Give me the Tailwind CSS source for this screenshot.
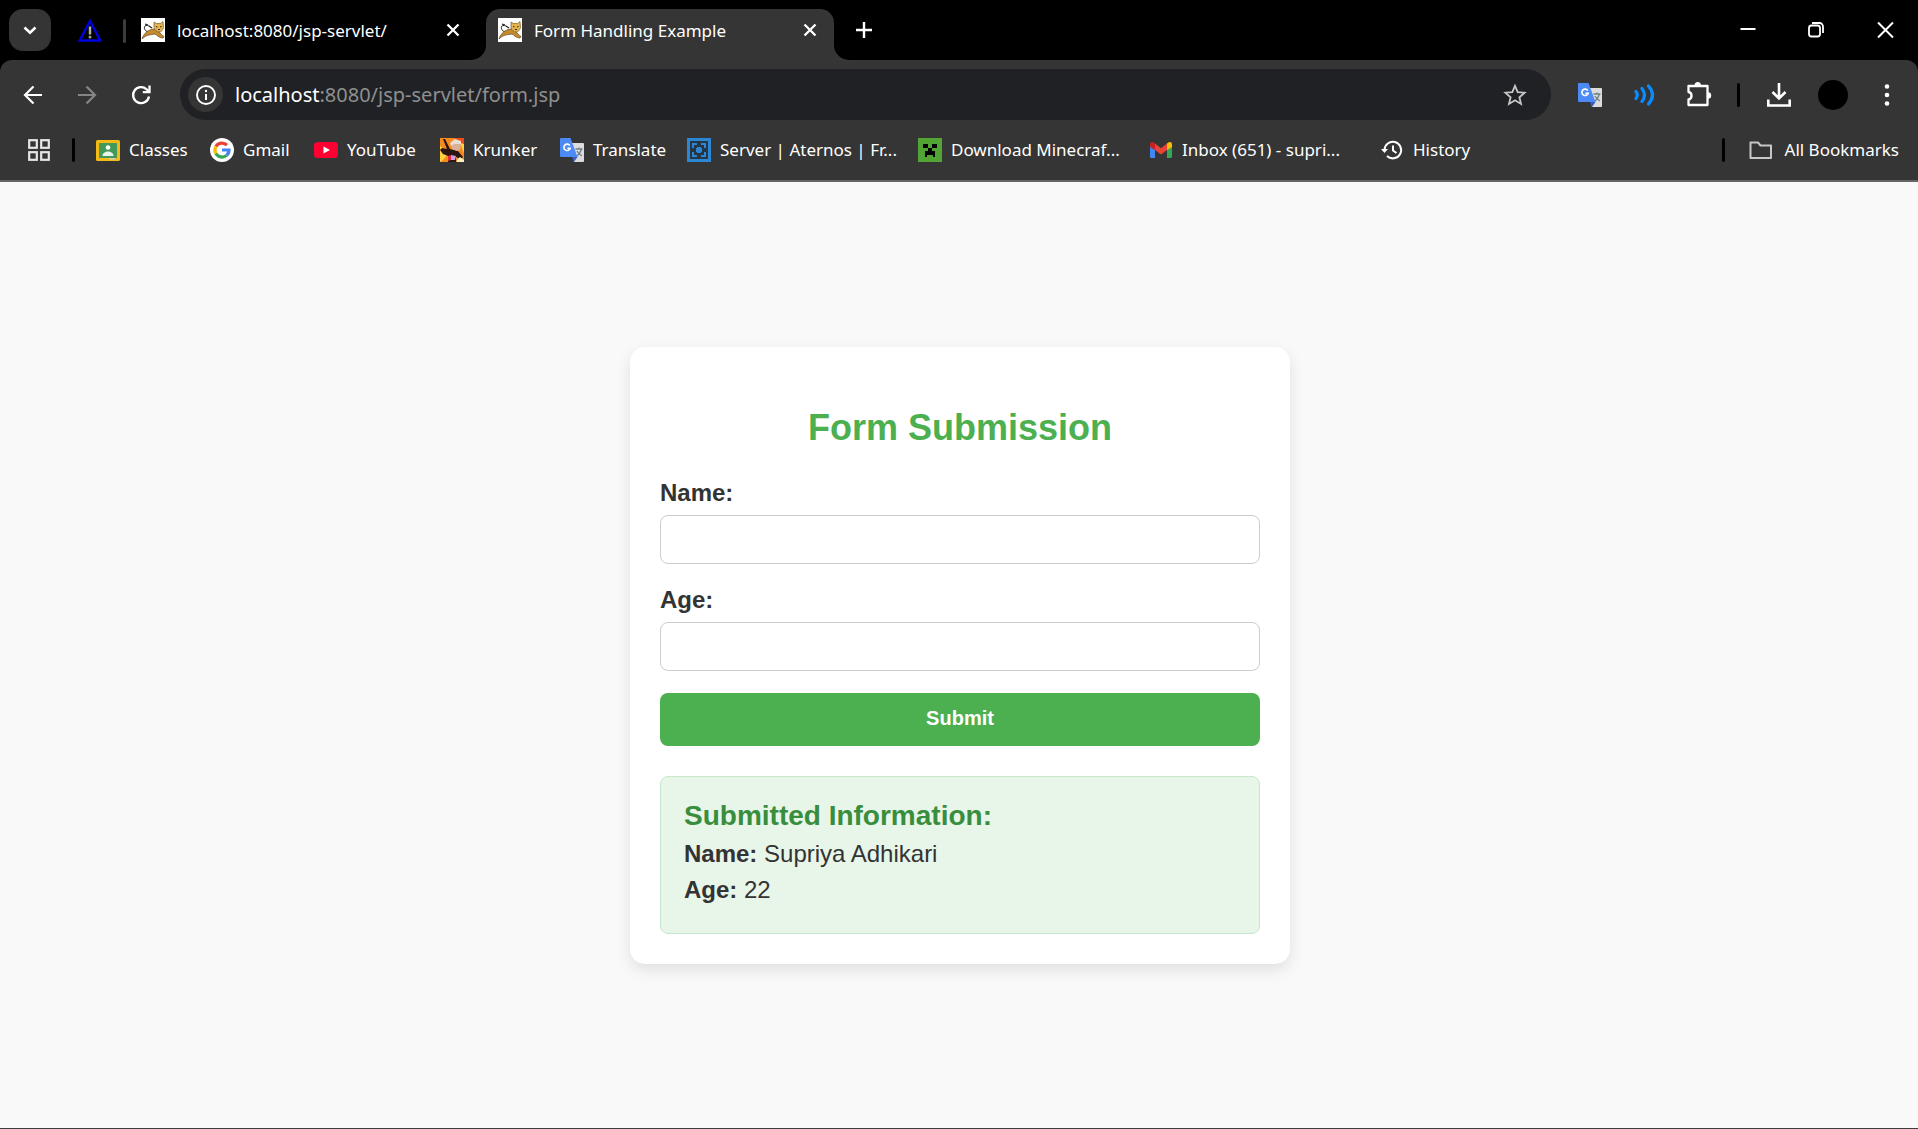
<!DOCTYPE html>
<html lang="en">
<head>
<meta charset="utf-8">
<meta name="viewport" content="width=device-width, initial-scale=1">
<title>Form Handling Example</title>
<script src="https://cdn.jsdelivr.net/npm/@tailwindcss/browser@4"></script>
</head>
<body class="min-h-screen flex flex-col bg-black">

<!-- Shared icon symbols -->
<svg class="hidden" aria-hidden="true">
  <symbol id="tomcat" viewBox="0 0 24 24">
    <rect width="24" height="24" fill="#fff"/>
    <path d="M9 14.500C3 14 2 8 5 7.500C7 7 8 8 9 9" fill="none" stroke="#222" stroke-width="1"/>
    <path d="M4 6l3 1M8 8l3 2" stroke="#222" stroke-width="1.200"/>
    <path d="M1 21C3 15 7 12 12 11L18 13C19 16 21 17 23 18.500L22 20C18 20 16 17 14 16C10 17 6 16 1 21Z" fill="#c58a2b" stroke="#5f4520" stroke-width=".7"/>
    <path d="M13 4l2.500 1.500h4L22 3.500l.5 6C22 12 20 14 18 14S13.500 12 13 9.500Z" fill="#e2b552" stroke="#7b5a25" stroke-width=".7"/>
    <path d="M15 8.500l1.500.5M20.500 8.500L19 9M17 11.500h2" stroke="#33250f" stroke-width="1"/>
  </symbol>
  <symbol id="translate" viewBox="0 0 24 24">
    <path d="M11 5h12a1 1 0 0 1 1 1v17a1 1 0 0 1-1 1h-9z" fill="#dcdcdc"/>
    <path d="M15.500 11h7M19 9.500V11M21.500 11c-1 4-3 6-5 7.500M17 13c1 2 3 4 5 5" fill="none" stroke="#70808a" stroke-width="1.300"/>
    <path d="M12 19h5.500L14 24z" fill="#3a5bc4"/>
    <path d="M1 0h9.500L17.500 19H1a1 1 0 0 1-1-1V1a1 1 0 0 1 1-1z" fill="#4c8bf5"/>
    <path d="M9.800 7.600A3.200 3.200 0 1 0 10.200 10.200H7.400" fill="none" stroke="#fff" stroke-width="1.600"/>
  </symbol>
  <symbol id="cross" viewBox="0 0 24 24">
    <path d="M6.500 6.500l11 11M17.500 6.500l-11 11" stroke="#fff" stroke-width="2.300" fill="none"/>
  </symbol>
</svg>

<header class="font-['Noto_Sans','Open_Sans',sans-serif] text-white">
  <!-- Tab strip -->
  <div class="flex h-[60px] items-end bg-black pl-[9px]">
    <button type="button" aria-label="Search tabs" class="mb-[9px] flex size-[42px] items-center justify-center rounded-[14px] bg-[#353535]">
      <svg class="size-6" viewBox="0 0 24 24"><path d="M6.500 9.500l5.500 5.200 5.500-5.200" fill="none" stroke="#fff" stroke-width="2.600"/></svg>
    </button>
    <a href="#" aria-label="Pinned tab" class="ml-[27px] mb-[18px]">
      <svg class="size-6" viewBox="0 0 24 24"><path d="M12 3L22.200 22.500H1.800Z" fill="#000" stroke="#0000e0" stroke-width="2.400"/><path d="M12 8.500v8" stroke="#b5b5a5" stroke-width="2.400"/><circle cx="12" cy="19" r="1.500" fill="#a0a090"/></svg>
    </a>
    <span class="ml-[21px] mb-[17px] h-6 w-[3px] rounded-full bg-[#3c3c3c]"></span>
    <div class="ml-[15px] flex h-[51px] w-[345px] items-center pr-[21px] pb-[9px]">
      <svg class="size-6 shrink-0"><use href="#tomcat"/></svg>
      <a href="#" class="ml-3 flex-1 pt-0.5 text-[17px] leading-6 whitespace-nowrap">localhost:8080/jsp-servlet/</a>
      <button type="button" aria-label="Close tab" class="size-6"><svg class="size-6"><use href="#cross"/></svg></button>
    </div>
    <div class="relative flex h-[51px] w-[348px] items-center rounded-t-[14px] bg-[#353535] px-3 pb-[9px]">
      <svg class="absolute right-full bottom-0 size-[15px]" viewBox="0 0 15 15"><path d="M15 0v15H0A15 15 0 0 0 15 0z" fill="#353535"/></svg>
      <svg class="absolute left-full bottom-0 size-[15px]" viewBox="0 0 15 15"><path d="M0 0v15h15A15 15 0 0 1 0 0z" fill="#353535"/></svg>
      <svg class="size-6 shrink-0"><use href="#tomcat"/></svg>
      <a href="#" class="ml-3 flex-1 pt-0.5 text-[17px] leading-6 whitespace-nowrap">Form Handling Example</a>
      <button type="button" aria-label="Close tab" class="size-6"><svg class="size-6"><use href="#cross"/></svg></button>
    </div>
    <button type="button" aria-label="New tab" class="ml-3 mb-3 flex size-9 items-center justify-center">
      <svg class="size-6" viewBox="0 0 24 24"><path d="M12 4v16M4 12h16" stroke="#fff" stroke-width="2.400"/></svg>
    </button>
    <div class="ml-auto flex h-full">
      <button type="button" aria-label="Minimize" class="flex w-[68px] items-center justify-center"><svg class="size-6" viewBox="0 0 24 24"><path d="M4.500 11h15" stroke="#fff" stroke-width="2"/></svg></button>
      <button type="button" aria-label="Restore" class="flex w-[68px] items-center justify-center"><svg class="size-6" viewBox="0 0 24 24" fill="none" stroke="#fff" stroke-width="1.800"><rect x="5" y="7.500" width="11" height="11" rx="2.500"/><path d="M8 5h7.500a3.500 3.500 0 0 1 3.500 3.500V15"/></svg></button>
      <button type="button" aria-label="Close" class="flex w-[68px] items-center justify-center"><svg class="size-6" viewBox="0 0 24 24"><path d="M6 4.500l15 15M21 4.500l-15 15" stroke="#fff" stroke-width="2"/></svg></button>
    </div>
  </div>

  <div class="rounded-t-[12px] border-b-2 border-[#666] bg-[#353535]">
    <!-- Address bar -->
    <div class="flex h-[69px] items-center pr-[19px] pl-[21px]">
      <button type="button" aria-label="Back" class="size-6"><svg class="size-6" viewBox="0 0 24 24" fill="none" stroke="#fff" stroke-width="2.200"><path d="M21 12H5M12.500 3.500L4 12l8.500 8.500"/></svg></button>
      <button type="button" aria-label="Forward" class="ml-[30px] size-6"><svg class="size-6" viewBox="0 0 24 24" fill="none" stroke="#858585" stroke-width="2.200"><path d="M3 12h16M11.500 3.500L20 12l-8.500 8.500"/></svg></button>
      <button type="button" aria-label="Reload" class="ml-[30px] size-6"><svg class="size-6" viewBox="0 0 24 24" fill="none" stroke="#fff" stroke-width="2.300"><path d="M20 13.500A8 8 0 1 1 17.600 6.300L20 8.700"/><path d="M20.500 2.500V9.200H13.800"/></svg></button>
      <div class="ml-[27px] flex h-[51px] flex-1 items-center rounded-full bg-[#202124] pr-6 pl-2">
        <button type="button" aria-label="View site information" class="flex size-[35px] items-center justify-center rounded-full bg-[#353535]">
          <svg class="size-6" viewBox="0 0 24 24"><circle cx="12" cy="12" r="9" fill="none" stroke="#fff" stroke-width="1.900"/><path d="M12 11v6" stroke="#fff" stroke-width="2"/><circle cx="12" cy="8" r="1.200" fill="#fff"/></svg>
        </button>
        <a href="#" class="ml-3 flex-1 text-[20px] leading-7 whitespace-nowrap text-[#8f8f8f]"><span class="text-white">localhost</span>:8080/jsp-servlet/form.jsp</a>
        <button type="button" aria-label="Bookmark this tab" class="size-6"><svg class="size-6" viewBox="0 0 24 24"><path d="M12 2.800l2.700 6.300 6.900.6-5.200 4.500 1.600 6.700-6-3.600-6 3.600 1.600-6.700-5.200-4.500 6.900-.6z" fill="none" stroke="#c7c7c7" stroke-width="1.800"/></svg></button>
      </div>
      <button type="button" aria-label="Google Translate" class="ml-[27px] size-6"><svg class="size-6"><use href="#translate"/></svg></button>
      <button type="button" aria-label="Read aloud" class="ml-[30px] size-6"><svg class="size-6" viewBox="0 0 24 24" fill="none" stroke="#0a8cff" stroke-width="3.200" stroke-linecap="round"><path d="M4 8.500q2.500 3.500 0 7M10 5.500q5 6.500 0 13M16.500 3q8 9 0 18"/></svg></button>
      <button type="button" aria-label="Extensions" class="ml-[30px] size-6"><svg class="size-6 overflow-visible" viewBox="0 0 24 24"><path d="M2.500 3h19v19h-19v-5.500c4-.7 4-7 0-7.500z" fill="none" stroke="#fff" stroke-width="2.300" stroke-linejoin="round"/><path d="M8.500 2.500a3.200 3.500 0 0 1 6.500 0zM22 9.200a3.200 3.200 0 0 1 0 6.400z" fill="#fff"/></svg></button>
      <span class="ml-[27px] h-6 w-[3px] rounded-full bg-black"></span>
      <button type="button" aria-label="Downloads" class="ml-[27px] size-6"><svg class="size-6" viewBox="0 0 24 24" fill="none" stroke="#fff" stroke-width="2.600"><path d="M12 0v15M5.500 9L12 15.500 18.500 9M1.300 16.500v6h21.400v-6"/></svg></button>
      <button type="button" aria-label="Profile" class="ml-[27px] size-[30px] rounded-full bg-black"></button>
      <button type="button" aria-label="Menu" class="ml-[27px] size-6"><svg class="size-6" viewBox="0 0 24 24" fill="#fff"><circle cx="12" cy="3.500" r="2.300"/><circle cx="12" cy="12" r="2.300"/><circle cx="12" cy="20.500" r="2.300"/></svg></button>
    </div>

    <!-- Bookmarks bar -->
    <nav class="flex h-[51px] items-center pr-[19px] pb-[9px] pl-[27px] text-[17px] leading-6 whitespace-nowrap">
      <button type="button" aria-label="Apps" class="size-6"><svg class="size-6" viewBox="0 0 24 24" fill="none" stroke="#e6e6e6" stroke-width="2.200"><rect x="2.200" y="2.200" width="7.600" height="7.600"/><rect x="14.200" y="2.200" width="7.600" height="7.600"/><rect x="2.200" y="14.200" width="7.600" height="7.600"/><rect x="14.200" y="14.200" width="7.600" height="7.600"/></svg></button>
      <span class="ml-[21px] h-6 w-[3px] rounded-full bg-black"></span>
      <a href="#" class="ml-[21px] flex w-[114px] items-center gap-[9px]"><svg class="size-6 shrink-0" viewBox="0 0 24 24"><rect y="2" width="24" height="21" rx="1.500" fill="#f5ba15"/><rect x="3" y="5" width="18" height="15" fill="#43995a"/><circle cx="12" cy="9.500" r="2.300" fill="#fff"/><path d="M6.500 18c0-6 11-6 11 0z" fill="#e8f3ea"/><path d="M13 20h6v1.500h-6z" fill="#d0d0c0"/></svg>Classes</a>
      <a href="#" class="flex w-[104px] items-center gap-[9px]"><svg class="size-6 shrink-0" viewBox="0 0 24 24" fill="none" stroke-width="3.200"><circle cx="12" cy="12" r="12" fill="#fff"/><path d="M17 7.200A7 7 0 0 0 5.900 8.500" stroke="#ea4335"/><path d="M5.900 8.500A7 7 0 0 0 5.900 15.500" stroke="#fbbc05"/><path d="M5.900 15.500A7 7 0 0 0 16.500 17.400" stroke="#34a853"/><path d="M16.500 17.400A7 7 0 0 0 19 12H12" stroke="#4285f4"/></svg>Gmail</a>
      <a href="#" class="flex w-[126px] items-center gap-[9px]"><svg class="size-6 shrink-0" viewBox="0 0 24 24"><rect y="4" width="24" height="16" rx="3.500" fill="#ff0033"/><path d="M9.500 8.500v7l6.500-3.500z" fill="#fff"/></svg>YouTube</a>
      <a href="#" class="flex w-[120px] items-center gap-[9px]"><svg class="size-6 shrink-0" viewBox="0 0 24 24"><rect width="24" height="24" fill="#f58a1f"/><path d="M0 0h24v7L14 0z" fill="#f04a18"/><path d="M0 8l9 7-6 7-3 2zM20 5l4 1v9z" fill="#ffd23a"/><path d="M3 1l2 0 5 10 8 2 5 6-2 2-5-2 0 5H8l0-6-5-2-3-4 2-2 5 1z" fill="#2a1512"/><path d="M11 5l5-2 5 2-1 7-3 1-5-2z" fill="#d9b196"/><path d="M10 5l5-4 6 2v3h-7l-3 2z" fill="#e9ddd2"/><path d="M8 18l3-1v5l-3 1z" fill="#e22c3c"/><path d="M11 17l5 1-1 4-4 0z" fill="#c9a0e8"/><path d="M17 22l3-3 4 3v2h-7z" fill="#fff0c0"/></svg>Krunker</a>
      <a href="#" class="flex w-[127px] items-center gap-[9px]"><svg class="size-6 shrink-0"><use href="#translate"/></svg>Translate</a>
      <a href="#" class="flex w-[231px] items-center gap-[9px]"><svg class="size-6 shrink-0" viewBox="0 0 24 24"><rect width="24" height="24" fill="#2b87d3"/><rect x="3" y="3" width="18" height="18" fill="#263645"/><path d="M9 9h6v6H9zM5 5h5v2H7v3H5zM14 5h5v5h-2V7h-3zM5 14h2v3h3v2H5zM17 14h2v5h-5v-2h3z" fill="#2b87d3"/><path d="M8 8h2v2H8zM14 8h2v2h-2zM8 14h2v2H8zM14 14h2v2h-2z" fill="#263645"/></svg>Server | Aternos | Fr...</a>
      <a href="#" class="flex w-[231px] items-center gap-[9px]"><svg class="size-6 shrink-0" viewBox="0 0 24 24"><rect width="24" height="24" fill="#52a535"/><path d="M5 6h5v4H5zM14 6h5v4h-5zM10 10h4v3h3v6h-2v-2h-6v2H7v-6h3z" fill="#000"/></svg>Download Minecraf...</a>
      <a href="#" class="flex w-[231px] items-center gap-[9px]"><svg class="size-6 shrink-0" viewBox="0 0 24 24"><path d="M1 7l5 4v9H2.500A1.500 1.500 0 0 1 1 18.500z" fill="#4285f4"/><path d="M23 7l-5 4v9h3.500a1.500 1.500 0 0 0 1.500-1.500z" fill="#34a853"/><path d="M6 5.500l6 4.700 6-4.700v6.500l-6 4.500L6 12z" fill="#ea4335"/><path d="M1 9V6.500C1 4 3.500 3.500 5 4.700l1 .8V12z" fill="#c5221f"/><path d="M23 9V6.500C23 4 20.500 3.500 19 4.700l-1 .8V12z" fill="#fbbc04"/></svg>Inbox (651) - supri...</a>
      <a href="#" class="flex items-center gap-[9px]"><svg class="size-6 shrink-0" viewBox="0 0 24 24" fill="none" stroke="#fff" stroke-width="2"><path d="M4.500 12a8.300 8.300 0 1 1 2.500 6"/><path d="M13 7.500V12.500l3.500 2.500"/><path d="M1 11h7l-3.500 4z" fill="#fff" stroke="none"/></svg>History</a>
      <span class="ml-auto h-6 w-[3px] rounded-full bg-black"></span>
      <a href="#" class="ml-6 flex items-center gap-3"><svg class="size-6 shrink-0" viewBox="0 0 24 24"><path d="M1.500 4.500h7.500l2.500 3h10.500v12.500H1.500z" fill="none" stroke="#c7c7c7" stroke-width="2" stroke-linejoin="round"/></svg>All Bookmarks</a>
    </nav>
  </div>
</header>

<!-- Page content -->
<main class="flex flex-1 items-center justify-center border-b border-[#3c3c3c] bg-[#f9f9f9] pl-0.5 font-['Liberation_Sans',Arial,sans-serif] text-2xl leading-9 text-[#333]">
  <div class="w-full max-w-[660px] rounded-[15px] bg-white p-[30px] shadow-[0_6px_15px_rgba(0,0,0,0.1)]">
    <h1 class="mt-6 mb-5 text-center text-[36px] leading-[54px] font-bold text-[#4caf50]">Form Submission</h1>
    <form>
      <label for="name" class="block font-bold">Name:</label>
      <input id="name" name="name" type="text" class="mt-1 block h-[49px] w-full rounded-[8px] border border-[#ccc] bg-white px-3">
      <label for="age" class="mt-[18px] block font-bold">Age:</label>
      <input id="age" name="age" type="text" class="mt-1 block h-[49px] w-full rounded-[8px] border border-[#ccc] bg-white px-3">
      <button type="submit" class="mt-[22px] block h-[53px] w-full rounded-[8px] bg-[#4caf50] pb-0.5 text-[20px] leading-6 font-bold text-white">Submit</button>
    </form>
    <section class="mt-[30px] rounded-[8px] border border-[#c8e6c9] bg-[#e8f5e9] px-[23px] pt-[19px] pb-[25px]">
      <h2 class="text-[28px] leading-10 font-bold text-[#388e3c]">Submitted Information:</h2>
      <p><strong>Name:</strong> Supriya Adhikari</p>
      <p><strong>Age:</strong> 22</p>
    </section>
  </div>
</main>
</body>
</html>
